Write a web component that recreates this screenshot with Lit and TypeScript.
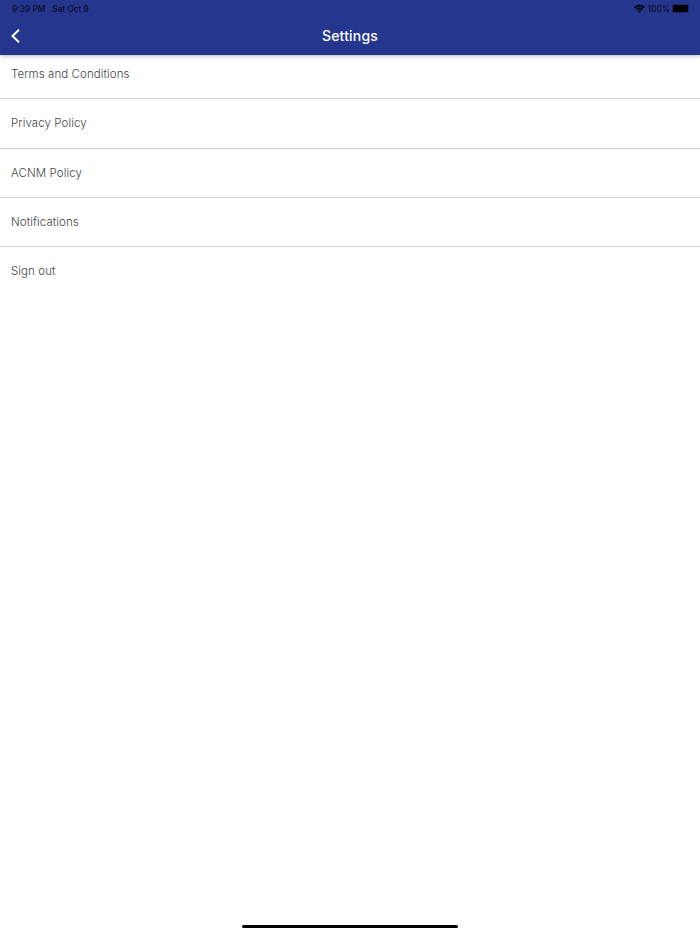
import { css, html, LitElement } from 'lit';
import { customElement } from 'lit/decorators.js';

const ROWS = ['Terms and Conditions', 'Privacy Policy', 'ACNM Policy', 'Notifications', 'Sign out'];

@customElement('app-root')
export class AppRoot extends LitElement {
  static styles = css`
    :host {
      display: flex;
      flex-direction: column;
      position: relative;
      height: 934px;
      background: #fff;
      font-family: Inter, 'Noto Sans', sans-serif;
      overflow: hidden;
    }

    .header {
      height: 55px;
      flex: none;
      background: #25368f;
      box-shadow: 0 1px 4px rgba(0, 0, 0, 0.3);
      display: flex;
      flex-direction: column;
      position: relative;
      z-index: 1;
    }

    .status {
      height: 17px;
      display: flex;
      align-items: center;
      justify-content: space-between;
      padding: 0 11px 0 12px;
      font-size: 8.3px;
      font-weight: 500;
      color: #080b24;
    }

    .status-left {
      display: flex;
      gap: 7px;
    }

    .status-right {
      display: flex;
      align-items: center;
      gap: 3px;
    }

    .battery {
      width: 15px;
      height: 7px;
      background: #000;
      border-radius: 1.5px;
      box-shadow: 0 0 0 1px #1c2a70;
      margin-right: 1px;
    }

    .nav {
      flex: 1;
      display: flex;
      align-items: center;
      justify-content: center;
      position: relative;
      padding-bottom: 2px;
    }

    .back {
      position: absolute;
      left: 10px;
      top: 11px;
      width: 11px;
      height: 16px;
    }

    .title {
      color: #fff;
      font-size: 14px;
      font-weight: 500;
      letter-spacing: 0.2px;
    }

    .rows {
      margin-top: -5px;
    }

    .row {
      height: 48.25px;
      padding-left: 11px;
      display: flex;
      align-items: center;
      border-bottom: 1px solid #cfcfcf;
      color: #444;
      font-size: 11.5px;
      font-weight: 300;
      letter-spacing: 0.08px;
    }

    .row:last-child {
      border-bottom: none;
    }

    .home {
      position: absolute;
      left: 242px;
      top: 925px;
      width: 216px;
      height: 3px;
      border-radius: 2px;
      background: #000;
    }
  `;

  render() {
    return html`
      <div class="header">
        <div class="status">
          <div class="status-left"><span>9:39 PM</span><span>Sat Oct 9</span></div>
          <div class="status-right">
            <svg width="11" height="9" viewBox="0 0 11 9" fill="#000">
              <path d="M0 3 A8 8 0 0 1 11 3 L9.9 4.2 A6.4 6.4 0 0 0 1.1 4.2Z" />
              <path d="M2 5 A5 5 0 0 1 9 5 L7.9 6.2 A3.4 3.4 0 0 0 3.1 6.2Z" />
              <path d="M3.9 7 A2.3 2.3 0 0 1 7.1 7 L5.5 8.7Z" />
            </svg>
            <span>100%</span>
            <div class="battery"></div>
          </div>
        </div>
        <div class="nav">
          <svg class="back" viewBox="0 0 11 16" fill="none" stroke="#fff" stroke-width="2">
            <path d="M9 1.7 L2.5 8 L9 14.3" />
          </svg>
          <span class="title">Settings</span>
        </div>
      </div>
      <div class="rows">
        ${ROWS.map((label) => html`<div class="row">${label}</div>`)}
      </div>
      <div class="home"></div>
    `;
  }
}
